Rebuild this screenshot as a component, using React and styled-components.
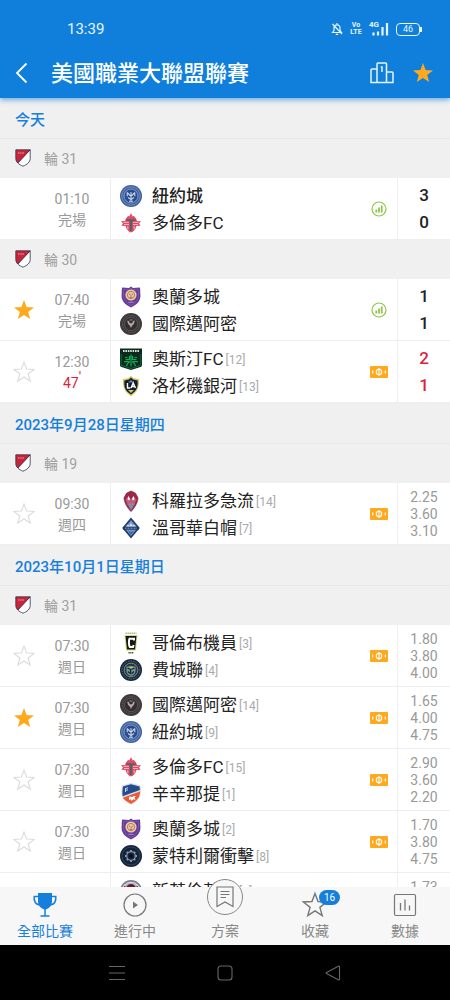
import React, { useState } from 'react';
import styled, { createGlobalStyle, css } from 'styled-components';

const STAR_PATH =
	'M12 2.1 14.6 9 22 9.4 16.2 14 18.2 21.1 12 17 5.8 21.1 7.8 14 2 9.4 9.4 9Z';

const sections = [
	{
		date: '今天',
		rounds: [
			{
				name: '輪 31',
				matches: [
					{
						id: 1,
						noStar: true,
						time: '01:10',
						status: '完場',
						icon: 'stats',
						home: { name: '紐約城', logo: 'nyc', winner: true },
						away: { name: '多倫多FC', logo: 'toronto' },
						scores: ['3', '0'],
					},
				],
			},
			{
				name: '輪 30',
				matches: [
					{
						id: 2,
						starred: true,
						time: '07:40',
						status: '完場',
						icon: 'stats',
						home: { name: '奧蘭多城', logo: 'orlando' },
						away: { name: '國際邁阿密', logo: 'miami' },
						scores: ['1', '1'],
					},
					{
						id: 3,
						time: '12:30',
						status: '47',
						live: true,
						icon: 'ticket',
						home: { name: '奧斯汀FC', logo: 'austin', rank: 12 },
						away: { name: '洛杉磯銀河', logo: 'galaxy', rank: 13 },
						scores: ['2', '1'],
					},
				],
			},
		],
	},
	{
		date: '2023年9月28日星期四',
		rounds: [
			{
				name: '輪 19',
				matches: [
					{
						id: 4,
						time: '09:30',
						status: '週四',
						icon: 'ticket',
						home: { name: '科羅拉多急流', logo: 'colorado', rank: 14 },
						away: { name: '溫哥華白帽', logo: 'vancouver', rank: 7 },
						odds: ['2.25', '3.60', '3.10'],
					},
				],
			},
		],
	},
	{
		date: '2023年10月1日星期日',
		rounds: [
			{
				name: '輪 31',
				matches: [
					{
						id: 5,
						time: '07:30',
						status: '週日',
						icon: 'ticket',
						home: { name: '哥倫布機員', logo: 'columbus', rank: 3 },
						away: { name: '費城聯', logo: 'philadelphia', rank: 4 },
						odds: ['1.80', '3.80', '4.00'],
					},
					{
						id: 6,
						starred: true,
						time: '07:30',
						status: '週日',
						icon: 'ticket',
						home: { name: '國際邁阿密', logo: 'miami', rank: 14 },
						away: { name: '紐約城', logo: 'nyc', rank: 9 },
						odds: ['1.65', '4.00', '4.75'],
					},
					{
						id: 7,
						time: '07:30',
						status: '週日',
						icon: 'ticket',
						home: { name: '多倫多FC', logo: 'toronto', rank: 15 },
						away: { name: '辛辛那提', logo: 'cincinnati', rank: 1 },
						odds: ['2.90', '3.60', '2.20'],
					},
					{
						id: 8,
						time: '07:30',
						status: '週日',
						icon: 'ticket',
						home: { name: '奧蘭多城', logo: 'orlando', rank: 2 },
						away: { name: '蒙特利爾衝擊', logo: 'montreal', rank: 8 },
						odds: ['1.70', '3.80', '4.75'],
					},
					{
						id: 9,
						time: '07:30',
						status: '週日',
						icon: 'ticket',
						home: { name: '新英倫革命', logo: 'revolution', rank: 5 },
						away: { name: '夏洛特FC', logo: 'montreal', rank: 11 },
						odds: ['1.73', '3.80', '4.33'],
					},
				],
			},
		],
	},
];

const logos = {
	nyc: (
		<>
			<circle cx='11' cy='11' r='11' fill='#3c5f9f' />
			<circle cx='11' cy='11' r='9.2' fill='none' stroke='#7f9ccb' strokeWidth='0.8' />
			<circle cx='11' cy='11' r='7' fill='#2b4a88' stroke='#a7bfe2' strokeWidth='0.7' />
			<path d='M7.2 7.5v3.8M14.8 7.5v3.8M7.2 7.5l3.800 4 3.800-4M11 7v9M8 12.500l3 2 3-2M9 16.200h4' fill='none' stroke='#c4d6ef' strokeWidth='1.1' />
		</>
	),
	toronto: (
		<>
			<path d='M6 6.5 8.2 3.8l1.2.8L11 1l1.6 3.6 1.2-.8L16 6.5 17 9l4 .2-2 2.3 1.6 2.2-4.2.2C15.5 17.5 13.5 19.5 11 20.5 8.5 19.5 6.5 17.5 5.6 13.9L1.4 13.7 3 11.5 1 9.2 5 9Z' fill='#e34b63' />
			<path d='M6.5 7.2h9v2h-3.3v9.5h-2.4V9.2H6.5Z' fill='#56606c' />
			<path d='M3.5 10.3h5.5M13 10.3h5.5M4 12.6h5M13 12.6h5' stroke='#f9c9d0' strokeWidth='0.9' />
			<path d='M7.8 14.3v2.7M14.2 14.3v2.7' stroke='#f6bac4' strokeWidth='1' />
		</>
	),
	orlando: (
		<>
			<path d='M11 .6 13 2l6.8-.4C20.6 4 20 6 20.4 9c.4 5.5-3 9.5-9.4 12.4C4.6 18.5 1.2 14.5 1.6 9 2 6 1.4 4 2.2 1.6L9 2Z' fill='#653a98' />
			<path d='M11 2.3 13 3.5l5.2-.3c.6 5.5 1.5 11.5-7.2 16.3C2.3 14.7 3.2 8.7 3.8 3.2L9 3.5Z' fill='none' stroke='#8f6bb8' strokeWidth='0.6' />
			<circle cx='11' cy='9' r='5.6' fill='#eccb9d' />
			<circle cx='11' cy='9' r='3.6' fill='none' stroke='#b27a68' strokeWidth='1' />
			<path d='M9 8.3h1.4M11.6 8.3H13M11 9v2M9.6 11.6h2.8' stroke='#9a6060' strokeWidth='0.8' />
			<path d='M8.5 16.3h5' stroke='#bfa2d8' strokeWidth='0.8' />
		</>
	),
	miami: (
		<>
			<circle cx='11' cy='11' r='11' fill='#3d3839' />
			<circle cx='11' cy='11' r='8.5' fill='none' stroke='#645b5c' strokeWidth='1' strokeDasharray='1.5 1' />
			<circle cx='11' cy='11' r='6.6' fill='#332e30' stroke='#716667' strokeWidth='0.6' />
			<path d='M7.3 7.5c1.3 0 2 .8 2.2 2.2L11 10.5l1.5-.8c.2-1.4.9-2.2 2.2-2.2-.2 2.5-1 4-2.5 5L11 15l-1.2-2.5c-1.5-1-2.3-2.5-2.5-5Z' fill='#b6a7a8' />
			<path d='M9.5 7h3' stroke='#b6a7a8' strokeWidth='0.8' />
		</>
	),
	austin: (
		<>
			<path d='M0 .5h22V17c0 1-.6 1.6-1.5 2L11 22l-9.5-3C.6 18.6 0 18 0 17Z' fill='#0c2a1c' />
			<path d='M3 3h16' stroke='#cfe3d8' strokeWidth='2' strokeDasharray='1.6 .8' />
			<path d='M11 6.5v12M9.5 8v3.5h-4M12.5 8v3.5h4M5 9.5h2.5M14.5 9.5H17M4 14c2-.8 4-.8 6 0M18 14c-2-.8-4-.8-6 0M6.5 18c.5-2.3 1.7-3.5 3-4M15.5 18c-.5-2.3-1.7-3.5-3-4' fill='none' stroke='#0fae58' strokeWidth='1.2' />
			<path d='M1.2 6v11.3l9.8 3.2 9.8-3.2V6' fill='none' stroke='#0d7c42' strokeWidth='0.8' />
		</>
	),
	galaxy: (
		<>
			<path d='M11 .8 13.3 3l5.9 1.3c-.3 1.5.2 2.5-.4 5.7-.5 4.5-3 8.2-7.8 11.2-4.8-3-7.3-6.7-7.8-11.2-.6-3.2-.1-4.2-.4-5.7L8.7 3Z' fill='#d8c55c' />
			<path d='M11 2.5 13 4.5l4.6 1c.3 5.5.3 9.5-6.6 14C4.1 15 4.1 11 4.4 5.5L9 4.5Z' fill='#101d36' />
			<path d='m11 4.5 1 2h2l-1.5 1.3L11 7.2l-1.5.6L8 6.5h2Z' fill='#7f93b0' />
			<path d='M7.5 8v5h2.8M11 13l2.2-5 2.3 5M11.8 11.5h2.7' fill='none' stroke='#fff' strokeWidth='1.4' />
			<path d='M8 15h6l-3 3Z' fill='#d8c55c' />
		</>
	),
	colorado: (
		<>
			<path d='M11 1 15.5 3.2 18 8c-.3 4.5-3 9.5-7 13.5C7 17.5 4.3 12.5 4 8l2.5-4.8Z' fill='#9f2748' />
			<path d='m5.5 10 3-4 2.5 3.5L13.5 6l3 4-2 3.5h-7Z' fill='#c35c7a' />
			<path d='m8.5 6 1.5 3-1 1.5-1.5-1.5ZM13.5 6 12 9l1 1.5 1.5-1.5Z' fill='#fff' />
			<path d='M7 13.5h8L11 20Z' fill='#98a9c6' />
			<path d='M9 14v3M11 14v5M13 14v3' stroke='#6b3560' strokeWidth='0.6' />
			<path d='M11 1 15.5 3.2 18 8c-.3 4.5-3 9.5-7 13.5C7 17.5 4.3 12.5 4 8l2.5-4.8Z' fill='none' stroke='#6e1c3a' strokeWidth='0.7' />
		</>
	),
	vancouver: (
		<>
			<path d='M11 .5 19.8 11 11 21.5 2.2 11Z' fill='#213a66' />
			<path d='M11 3 17.5 11 11 19 4.5 11Z' fill='#7398ca' />
			<path d='m6 9.5 2-2 1.5 1.5L11 6l1.7 3L14 7.5l2 2Z' fill='#dbe7f6' />
			<path d='M3 9.8h16v2.9H3Z' fill='#213a66' />
			<path d='M5 11.2h12' stroke='#a8c0e0' strokeWidth='0.8' strokeDasharray='1 .5' />
			<path d='m8 13.5 3 4.5 3-4.5-3 1.5Z' fill='#3c659f' />
		</>
	),
	columbus: (
		<>
			<path d='M5.5 1.2h11' stroke='#aeb37c' strokeWidth='1.4' strokeDasharray='1.4 .6' />
			<path d='M4.5 3h13L16 18.5H6Z' fill='#d8dd7a' />
			<path d='M5.5 4h11L15 17.5H7Z' fill='#15171a' />
			<path d='M14 8.5V6.8H9.5c-.8 1.5-.8 6.5.3 8.2H13l.6-2' fill='none' stroke='#fff' strokeWidth='2' />
			<path d='M8.5 20.7h5' stroke='#3c3e2d' strokeWidth='1.5' strokeDasharray='1.2 .6' />
		</>
	),
	philadelphia: (
		<>
			<circle cx='11' cy='11' r='11' fill='#14283f' />
			<circle cx='11' cy='11' r='9' fill='none' stroke='#5b7183' strokeWidth='1' strokeDasharray='1.6 1' />
			<circle cx='11' cy='11' r='6.9' fill='#203951' stroke='#9b9367' strokeWidth='0.9' />
			<path d='M6.5 7.5h9V12c0 2.5-2 4-4.5 5-2.5-1-4.5-2.5-4.5-5Z' fill='#7c998f' />
			<path d='m7.5 9 3 1.5.5 5M14.5 9l-3 1.5M8 12.5l2 2M14 12.5l-2 2' stroke='#12263c' strokeWidth='1.3' fill='none' />
			<path d='M8.5 7.5h5L11 9.5Z' fill='#cdb874' />
		</>
	),
	cincinnati: (
		<>
			<path d='M2 2.5 11 0l9.5 2.5C21.5 9 22 16.5 11 22 0 16.5 1 9 2 2.5Z' fill='#d5dce8' />
			<path d='M3 3.5 11 1.3l8.5 2.2.4 3.5L2.6 13.2C2.2 9.5 2.5 6.5 3 3.5Z' fill='#244b8d' />
			<path d='M2.9 14.8 20 8.5c.2 5-2.5 9-9 12.3-4-2-6.9-3.8-8.1-6Z' fill='#ed5a31' />
			<path d='m5.5 5.5 2.5-.8M5.5 5v4M5.5 7.5 8 6.7' stroke='#c7d7f0' strokeWidth='1' />
			<path d='M9 14.5c1-2 2.2-.2 3.2-.5 1-.6 2-1.3 3.8-1l-1.5 1.6 1 2.4-2-.8-2 1.8-.5-1.8-2 .8Z' fill='#fff' />
		</>
	),
	montreal: (
		<>
			<circle cx='11' cy='11' r='11' fill='#14243a' />
			<circle cx='11' cy='11' r='9' fill='none' stroke='#3d4e63' strokeWidth='0.7' />
			<g stroke='#8a97a6' strokeWidth='1.8'>
				<path d='M11 5v12M5 11h12M6.8 6.8l8.4 8.4M15.2 6.8l-8.4 8.4' />
			</g>
			<circle cx='11' cy='11' r='4.3' fill='#14243a' stroke='#8a97a6' strokeWidth='1.2' />
			<circle cx='11' cy='11' r='1.8' fill='#050d18' />
		</>
	),
	revolution: (
		<>
			<circle cx='11' cy='11' r='11' fill='#77808f' />
			<circle cx='11' cy='11' r='9.3' fill='#f0edf0' />
			<path d='M11 2.5a8.5 8.5 0 0 1 8.5 8.5h-17A8.5 8.5 0 0 1 11 2.5Z' fill='#c3b0ba' />
			<circle cx='11' cy='9' r='5' fill='#5b1d32' />
			<path d='M4 6.5 6.5 8M18 6.5 15.5 8' stroke='#5b1d32' strokeWidth='1.2' />
		</>
	),
};

const StarIcon = ({ size = 24, filled, color }) => (
	<svg width={size} height={size} viewBox='0 0 24 24' aria-hidden='true'>
		<path
			d={STAR_PATH}
			fill={filled ? color : 'none'}
			stroke={filled ? 'none' : color}
			strokeWidth='1.2'
		/>
	</svg>
);

const LeagueIcon = () => (
	<svg width='16' height='18' viewBox='0 0 16 18' aria-hidden='true'>
		<path d='M.8.8h14.4v8.7c0 3.5-3 6-7.2 7.7C3.8 15.5.8 13 .8 9.5Z' fill='#fff' />
		<path d='M.8.8h14.4L2.8 14C1.3 12.8.8 11.2.8 9.5Z' fill='#c9243c' />
		<path d='M3 4h6' stroke='#eea6b0' strokeWidth='1.2' strokeDasharray='1.5 .7' />
		<path d='M15.2.8 2.8 14' stroke='#4d2236' strokeWidth='1' />
		<path d='M.8.8h14.4v8.7c0 3.5-3 6-7.2 7.7C3.8 15.5.8 13 .8 9.5Z' fill='none' stroke='#26324d' strokeWidth='0.8' />
	</svg>
);

const StatsIcon = () => (
	<svg width='16' height='16' viewBox='0 0 16 16' aria-hidden='true'>
		<circle cx='8' cy='8' r='7' fill='none' stroke='#8ec549' strokeWidth='1.2' />
		<path d='M5.3 8.5v3M8 6.5v5M10.7 4.5v7' stroke='#8ec549' strokeWidth='1.8' />
	</svg>
);

const TicketIcon = () => (
	<svg width='18' height='12' viewBox='0 0 18 12' aria-hidden='true'>
		<rect width='18' height='12' rx='1' fill='#ffa91e' />
		<circle cx='9' cy='6' r='2.7' fill='none' stroke='#fff' strokeWidth='1.1' />
		<path d='M9 2v8M2.7 4.5v3M15.3 4.5v3' stroke='#fff' strokeWidth='1.1' />
	</svg>
);

const TrophyIcon = () => (
	<svg width='26' height='26' viewBox='0 0 26 26' aria-hidden='true'>
		<path d='M6 1h14v8.5c0 4-3 7.5-7 8-4-.5-7-4-7-8Z' fill='#157fdb' />
		<path d='M6 4.5H2.2C1.8 8.5 3 12 7.5 13M20 4.5h3.8c.4 4-.8 7.5-5.3 8.5M13 17v6.5M8.5 24h9' fill='none' stroke='#157fdb' strokeWidth='1.5' />
	</svg>
);

const PlayIcon = () => (
	<svg width='26' height='26' viewBox='0 0 26 26' aria-hidden='true'>
		<circle cx='13' cy='13' r='11' fill='none' stroke='#777' strokeWidth='1.2' />
		<path d='m11 9.5 5 3.5-5 3.5Z' fill='#777' />
	</svg>
);

const NoteIcon = () => (
	<svg width='20' height='22' viewBox='0 0 20 22' aria-hidden='true'>
		<path d='M2 1h16v19.5L10 16l-8 4.5Z' fill='none' stroke='#777' strokeWidth='1.2' />
		<path d='M5.5 5.5h9M5.5 8.5h9M5.5 11.5H11' stroke='#777' strokeWidth='1.2' />
	</svg>
);

const ChartIcon = () => (
	<svg width='26' height='26' viewBox='0 0 26 26' aria-hidden='true'>
		<rect x='2.5' y='2.5' width='21' height='21' rx='1.5' fill='none' stroke='#777' strokeWidth='1.2' />
		<path d='M8.5 11v7.5M13 7.5v11M17.5 13.5v5' stroke='#777' strokeWidth='1.3' />
	</svg>
);

const tabs = [
	{ id: 'all', label: '全部比賽', icon: <TrophyIcon /> },
	{ id: 'live', label: '進行中', icon: <PlayIcon /> },
	{ id: 'plan', label: '方案', icon: <NoteIcon />, round: true },
	{
		id: 'favorites',
		label: '收藏',
		icon: <StarIcon size={28} color='#777' />,
		count: 16,
	},
	{ id: 'data', label: '數據', icon: <ChartIcon /> },
];

const TeamLine = ({ team }) => (
	<Team $winner={team.winner}>
		<svg width='22' height='22' viewBox='0 0 22 22' aria-hidden='true'>
			{logos[team.logo]}
		</svg>
		<TeamName>
			{team.name}
			{team.rank && <Rank>[{team.rank}]</Rank>}
		</TeamName>
	</Team>
);

const Match = ({ match }) => {
	const [starred, setStarred] = useState(Boolean(match.starred));

	return (
		<MatchRow>
			<InfoCell>
				{match.noStar ? (
					<span />
				) : (
					<StarButton
						type='button'
						aria-label='收藏'
						aria-pressed={starred}
						onClick={() => setStarred(!starred)}
					>
						<StarIcon filled={starred} color={starred ? '#ffaa1c' : '#ddd'} />
					</StarButton>
				)}
				<TimeBlock>
					<span>{match.time}</span>
					{match.live ? (
						<LiveMinute>
							{match.status}
							<Tick>'</Tick>
						</LiveMinute>
					) : (
						<span>{match.status}</span>
					)}
				</TimeBlock>
			</InfoCell>
			<TeamsCell>
				<TeamLine team={match.home} />
				<TeamLine team={match.away} />
			</TeamsCell>
			<IconCell>
				{match.icon === 'stats' ? <StatsIcon /> : <TicketIcon />}
			</IconCell>
			<ResultCell>
				{match.scores &&
					match.scores.map((score, i) => (
						<Score key={i} $live={match.live}>
							{score}
						</Score>
					))}
				{match.odds && match.odds.map((odd, i) => <Odd key={i}>{odd}</Odd>)}
			</ResultCell>
		</MatchRow>
	);
};

const App = () => {
	const [activeTab, setActiveTab] = useState('all');

	return (
		<Page>
			<GlobalStyle />
			<Header>
				<StatusBar>
					<span>13:39</span>
					<StatusIcons>
						<svg width='12' height='14' viewBox='0 0 12 14' aria-hidden='true'>
							<path d='M1.5 10.5h9L9 8.5V6C9 4 7.8 2.8 6 2.8S3 4 3 6v2.5ZM6 1v1.5M4.8 12.3h2.4M1.5 2l9.5 10' fill='none' stroke='#e6f5ff' strokeWidth='1.2' />
						</svg>
						<VoLte>
							<span>Vo</span>
							<span>LTE</span>
						</VoLte>
						<Signal>
							<SignalLabel>4G</SignalLabel>
							<svg width='20' height='14' viewBox='0 0 20 14' aria-hidden='true'>
								<path d='M4.5 13.5v-3M9 13.5v-4M13.5 13.5V5M18 13.5V1' stroke='#e6f5ff' strokeWidth='2.2' />
							</svg>
						</Signal>
						<Battery>46</Battery>
					</StatusIcons>
				</StatusBar>
				<Toolbar>
					<BackButton type='button' aria-label='返回'>
						<svg width='24' height='24' viewBox='0 0 24 24' aria-hidden='true'>
							<path d='M16.5 2.5 7 12l9.5 9.5' fill='none' stroke='#fff' strokeWidth='1.8' />
						</svg>
					</BackButton>
					<Title>美國職業大聯盟聯賽</Title>
					<ToolButton type='button' aria-label='積分榜'>
						<svg width='26' height='24' viewBox='0 0 26 24' aria-hidden='true'>
							<path d='M8 21.5V3c0-.6.4-1 1-1h7.5c.6 0 1 .4 1 1v18.5M8 8H3c-.6 0-1 .4-1 1v12.5h22V12c0-.6-.4-1-1-1h-5.5M11.8 6H13v5' fill='none' stroke='#e6f5ff' strokeWidth='1.5' />
						</svg>
					</ToolButton>
					<ToolButton type='button' aria-label='收藏聯賽'>
						<StarIcon filled color='#ffa91e' />
					</ToolButton>
				</Toolbar>
			</Header>

			<MatchList>
				{sections.map((section) => (
					<section key={section.date}>
						<DateHeading>{section.date}</DateHeading>
						{section.rounds.map((round) => (
							<div key={round.name}>
								<RoundHeading>
									<LeagueIcon />
									{round.name}
								</RoundHeading>
								{round.matches.map((match) => (
									<Match key={match.id} match={match} />
								))}
							</div>
						))}
					</section>
				))}
			</MatchList>

			<TabBar>
				{tabs.map((tab) => (
					<Tab
						key={tab.id}
						type='button'
						$active={tab.id === activeTab}
						onClick={() => setActiveTab(tab.id)}
					>
						<TabIcon $round={tab.round}>
							{tab.icon}
							{tab.count && <Count>{tab.count}</Count>}
						</TabIcon>
						{tab.label}
					</Tab>
				))}
			</TabBar>

			<SystemBar>
				<SystemButton type='button' aria-label='選單'>
					<svg width='18' height='18' viewBox='0 0 18 18' aria-hidden='true'>
						<path d='M1 2.5h16M1 9h16M1 15.5h16' stroke='#666' strokeWidth='1.1' />
					</svg>
				</SystemButton>
				<SystemButton type='button' aria-label='主畫面'>
					<svg width='18' height='18' viewBox='0 0 18 18' aria-hidden='true'>
						<rect x='2' y='2' width='14' height='14' rx='3' fill='none' stroke='#666' strokeWidth='1.1' />
					</svg>
				</SystemButton>
				<SystemButton type='button' aria-label='上一頁'>
					<svg width='18' height='18' viewBox='0 0 18 18' aria-hidden='true'>
						<path d='M15.5 3v12c0 .8-.6 1-1.2.7L2.5 9.6c-.5-.3-.5-.9 0-1.2l11.8-6.1c.6-.3 1.2-.1 1.2.7Z' fill='none' stroke='#666' strokeWidth='1.1' />
					</svg>
				</SystemButton>
			</SystemBar>
		</Page>
	);
};

const GlobalStyle = createGlobalStyle`
	* {
		box-sizing: border-box;
	}

	body {
		margin: 0;
		font-family: Roboto, 'Noto Sans CJK TC', sans-serif;
		background: #f0f0f0;
	}

	button {
		padding: 0;
		border: none;
		background: none;
		font-family: inherit;
		cursor: pointer;
	}

	svg {
		display: block;
		flex-shrink: 0;
	}
`;

const Page = styled.div`
	display: flex;
	flex-direction: column;
	height: 100vh;
`;

const Header = styled.header`
	position: relative;
	z-index: 1;
	flex-shrink: 0;
	background: #107fdc;
	color: #fff;
	box-shadow: 0 2px 5px rgba(16, 127, 220, 0.6);
`;

const StatusBar = styled.div`
	display: flex;
	align-items: center;
	justify-content: space-between;
	height: 48px;
	padding: 10px 28px 0 67px;
	color: #e6f5ff;
	font-size: 15px;
`;

const StatusIcons = styled.div`
	display: flex;
	align-items: center;
	gap: 7px;
`;

const VoLte = styled.span`
	display: flex;
	flex-direction: column;
	align-items: center;
	width: 12px;
	font-size: 7px;
	font-weight: 700;
	line-height: 7px;
`;

const Signal = styled.span`
	position: relative;
`;

const SignalLabel = styled.span`
	position: absolute;
	top: -1px;
	left: 0;
	font-size: 8px;
	font-weight: 700;
	line-height: 8px;
`;

const Battery = styled.span`
	position: relative;
	width: 24px;
	height: 13px;
	margin-right: 2px;
	border: 1px solid #e6f5ff;
	border-radius: 4px;
	font-size: 9px;
	line-height: 11px;
	text-align: center;

	&::after {
		content: '';
		position: absolute;
		top: 3px;
		right: -3px;
		width: 2px;
		height: 5px;
		background: #e6f5ff;
	}
`;

const Toolbar = styled.div`
	display: flex;
	align-items: center;
	height: 50px;
	padding-right: 7px;
`;

const BackButton = styled.button`
	width: 51px;
	height: 50px;
	padding-left: 10px;
`;

const Title = styled.h1`
	flex: 1;
	margin: 0;
	padding-top: 2px;
	font-size: 22px;
	font-weight: 500;
	line-height: 32px;
	white-space: nowrap;
`;

const ToolButton = styled.button`
	display: flex;
	align-items: center;
	justify-content: center;
	width: 41px;
	height: 50px;
`;

const MatchList = styled.main`
	flex: 1;
	min-height: 0;
	overflow-y: auto;
	scrollbar-width: none;
`;

const DateHeading = styled.h2`
	height: 41px;
	margin: 0;
	padding: 2px 15px 0;
	border-bottom: 1px solid #e8e8e8;
	color: #157fdb;
	font-size: 15px;
	font-weight: 500;
	line-height: 40px;
`;

const RoundHeading = styled.h3`
	display: flex;
	align-items: center;
	gap: 13px;
	height: 39px;
	margin: 0;
	padding: 0 15px 2px;
	color: #a0a0a0;
	font-size: 14px;
	font-weight: 400;
`;

const MatchRow = styled.article`
	display: flex;
	height: 62px;
	border-bottom: 1px solid #eee;
	background: #fff;
`;

const InfoCell = styled.div`
	display: grid;
	grid-template-columns: 48px 48px;
	width: 111px;
	border-right: 1px solid #eee;
`;

const StarButton = styled.button`
	display: flex;
	align-items: center;
	justify-content: center;
`;

const TimeBlock = styled.div`
	display: flex;
	flex-direction: column;
	align-items: center;
	justify-content: center;
	padding-top: 2px;
	color: #999;
	font-size: 14px;
	line-height: 21px;
	white-space: nowrap;
`;

const LiveMinute = styled.span`
	color: #d9233c;
`;

const Tick = styled.sup`
	font-size: 14px;
	line-height: 0;
`;

const TeamsCell = styled.div`
	display: flex;
	flex: 1;
	flex-direction: column;
	justify-content: center;
	min-width: 0;
	padding: 2px 0 0 9px;
`;

const Team = styled.div`
	display: flex;
	align-items: center;
	gap: 10px;
	color: #222;
	font-size: 17px;
	font-weight: ${({ $winner }) => ($winner ? 500 : 400)};
	line-height: 27px;
	white-space: nowrap;
`;

const TeamName = styled.span`
	height: 27px;
`;

const Rank = styled.small`
	margin-left: 2px;
	color: #aaa;
	font-size: 12px;
	font-weight: 400;
	line-height: 12px;
	vertical-align: 1px;
`;

const IconCell = styled.div`
	display: flex;
	align-items: center;
	justify-content: center;
	width: 36px;
`;

const ResultCell = styled.div`
	display: flex;
	flex-direction: column;
	align-items: center;
	justify-content: center;
	width: 53px;
	padding-top: 1px;
	border-left: 1px solid #f0f0f0;
`;

const Score = styled.span`
	color: ${({ $live }) => ($live ? '#d9233c' : '#222')};
	font-size: 17px;
	font-weight: 500;
	line-height: 27px;
`;

const Odd = styled.span`
	color: #999;
	font-size: 14px;
	line-height: 17px;
`;

const TabBar = styled.nav`
	position: relative;
	z-index: 1;
	display: grid;
	flex-shrink: 0;
	grid-template-columns: repeat(5, 1fr);
	grid-template-rows: 58px;
	background: #f7f7f7;
`;

const Tab = styled.button`
	display: flex;
	flex-direction: column;
	align-items: center;
	justify-content: flex-end;
	padding-bottom: 4px;
	color: ${({ $active }) => ($active ? '#157fdb' : '#888')};
	font-size: 14px;
	line-height: 20px;
`;

const TabIcon = styled.span`
	position: relative;
	display: flex;
	flex-shrink: 0;
	align-items: center;
	justify-content: center;
	width: 28px;
	height: 26px;
	margin-bottom: 3px;

	${({ $round }) =>
		$round &&
		css`
			width: 36px;
			height: 36px;
			margin-bottom: 6px;
			border: 1px solid #888;
			border-radius: 50%;
			background: #f7f7f7;
		`}
`;

const Count = styled.span`
	position: absolute;
	top: -2px;
	left: 18px;
	width: 21px;
	height: 15px;
	border-radius: 8px;
	background: #157fdb;
	color: #fff;
	font-size: 10px;
	line-height: 15px;
	text-align: center;
`;

const SystemBar = styled.div`
	display: flex;
	align-items: center;
	justify-content: center;
	gap: 54px;
	flex-shrink: 0;
	height: 55px;
	background: #000;
`;

const SystemButton = styled.button`
	display: flex;
	align-items: center;
	justify-content: center;
	width: 54px;
	height: 54px;
`;

export default App;
